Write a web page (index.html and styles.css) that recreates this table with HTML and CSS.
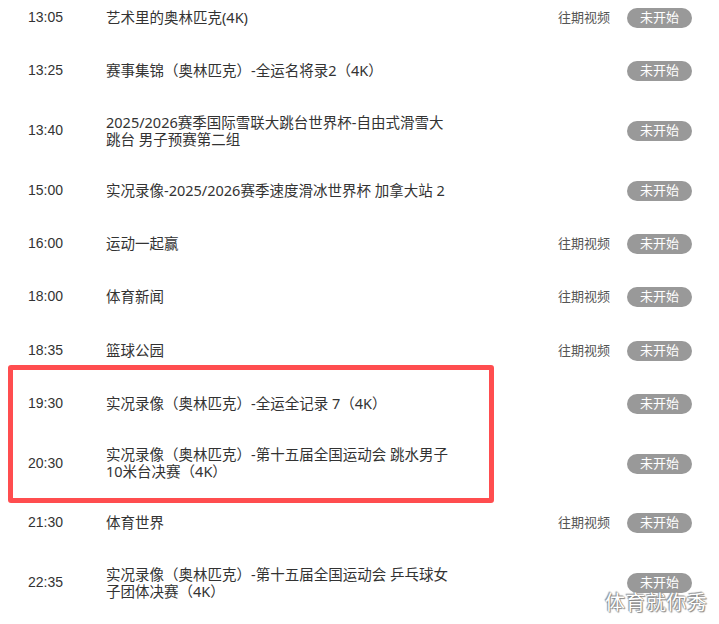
FILE: index.html
```html
<!DOCTYPE html>
<html lang="zh-CN">
<head>
<meta charset="utf-8">
<title>节目单</title>
<link rel="stylesheet" href="styles.css">
</head>
<body>
<div class="page">
  <ul class="list">
    <li class="row"><span class="time">13:05</span><span class="title">艺术里的奥林匹克(4K)</span><span class="replay">往期视频</span><span class="btn">未开始</span></li>
    <li class="row"><span class="time">13:25</span><span class="title">赛事集锦（奥林匹克）-全运名将录2（4K）</span><span class="replay"></span><span class="btn">未开始</span></li>
    <li class="row"><span class="time">13:40</span><span class="title">2025/2026赛季国际雪联大跳台世界杯-自由式滑雪大跳台 男子预赛第二组</span><span class="replay"></span><span class="btn">未开始</span></li>
    <li class="row"><span class="time">15:00</span><span class="title">实况录像-2025/2026赛季速度滑冰世界杯 加拿大站 2</span><span class="replay"></span><span class="btn">未开始</span></li>
    <li class="row"><span class="time">16:00</span><span class="title">运动一起赢</span><span class="replay">往期视频</span><span class="btn">未开始</span></li>
    <li class="row"><span class="time">18:00</span><span class="title">体育新闻</span><span class="replay">往期视频</span><span class="btn">未开始</span></li>
    <li class="row"><span class="time">18:35</span><span class="title">篮球公园</span><span class="replay">往期视频</span><span class="btn">未开始</span></li>
    <li class="row"><span class="time">19:30</span><span class="title">实况录像（奥林匹克）-全运全记录 7（4K）</span><span class="replay"></span><span class="btn">未开始</span></li>
    <li class="row"><span class="time">20:30</span><span class="title">实况录像（奥林匹克）-第十五届全国运动会 跳水男子10米台决赛（4K）</span><span class="replay"></span><span class="btn">未开始</span></li>
    <li class="row"><span class="time">21:30</span><span class="title">体育世界</span><span class="replay">往期视频</span><span class="btn">未开始</span></li>
    <li class="row"><span class="time">22:35</span><span class="title">实况录像（奥林匹克）-第十五届全国运动会 乒乓球女子团体决赛（4K）</span><span class="replay"></span><span class="btn">未开始</span></li>
  </ul>
  <div class="highlight"></div>
  <div class="watermark">体育就你秀</div>
</div>
</body>
</html>
```

FILE: styles.css
```css
html, body {
  margin: 0;
  padding: 0;
  background: #ffffff;
}
body {
  font-family: "Liberation Sans", "Noto Sans CJK SC", sans-serif;
  color: #333333;
  overflow: hidden;
}
.page {
  position: relative;
  width: 719px;
  height: 624px;
  overflow: hidden;
}
.list {
  list-style: none;
  margin: -9px 0 0 0;
  padding: 0;
}
.row {
  display: flex;
  align-items: center;
  min-height: 53.33px;
  padding: 16px 27px 16px 28px;
  box-sizing: border-box;
  font-size: 14px;
  line-height: 17px;
}
.time {
  width: 78px;
  flex: none;
  color: #333;
}
.title {
  width: 345px;
  flex: none;
  color: #333;
  font-size: 14.5px;
  font-family: "Noto Sans", "Noto Sans CJK SC", sans-serif;
}
.replay {
  flex: 1;
  text-align: right;
  font-size: 13px;
  color: #555;
  padding-right: 17px;
}
.btn {
  flex: none;
  width: 65px;
  height: 20px;
  border-radius: 10px;
  background: #999999;
  color: #ffffff;
  font-size: 13px;
  line-height: 20px;
  text-align: center;
  margin-top: 1px;
}
.highlight {
  position: absolute;
  left: 8px;
  top: 365px;
  width: 486px;
  height: 138px;
  box-sizing: border-box;
  border: 5px solid #ff4d4f;
  border-radius: 3px;
  pointer-events: none;
}
.watermark {
  position: absolute;
  left: 605px;
  top: 590px;
  font-size: 20px;
  line-height: 24px;
  letter-spacing: 0.5px;
  color: #ffffff;
  font-family: "Noto Sans CJK SC", sans-serif;
  text-shadow: 0 0 1px #666, 1px 1px 1px #888, -1px -1px 1px #999;
}
```
